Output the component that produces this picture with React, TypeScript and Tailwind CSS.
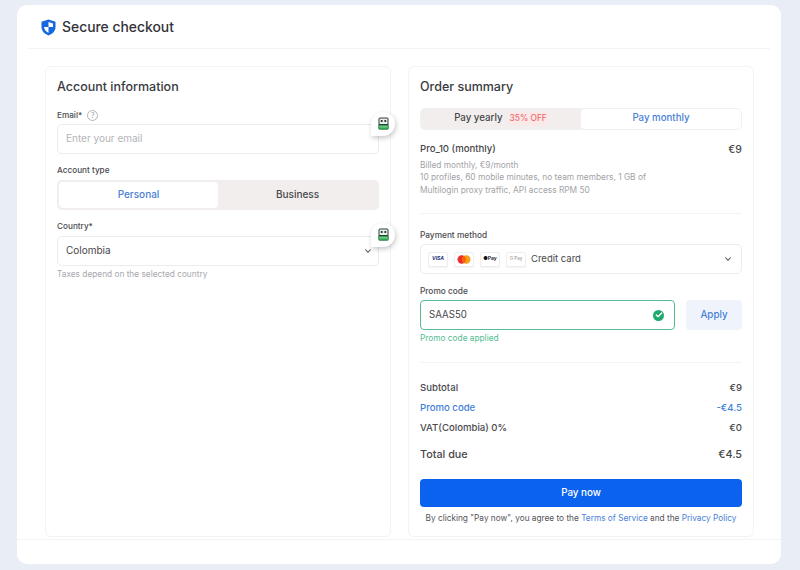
import { ChevronDown, Check } from 'lucide-react'

function ShieldIcon() {
  return (
    <svg width="15" height="17" viewBox="0 0 15 17">
      <path d="M7.5 0.5 L14.5 2.8 V8 C14.5 12 11.5 15 7.5 16.5 C3.5 15 0.5 12 0.5 8 V2.8 Z" fill="#1667e0" />
      <path d="M7.5 3 L12 4.5 V8 H7.5 Z" fill="#fff" />
      <path d="M7.5 8 H3 C3.3 10.6 5 12.7 7.5 13.9 Z" fill="#fff" />
    </svg>
  )
}

function RobotBubble({ top }: { top: string }) {
  return (
    <div className={`absolute ${top} right-[-16px] w-6 h-6 bg-white rounded-t-full rounded-br-full rounded-bl-[4px] shadow-[1px_2px_5px_rgba(0,0,0,0.22)] flex items-center justify-center z-10`}>
      <svg width="11" height="13" viewBox="0 0 11 13">
        <rect x="0.5" y="0.5" width="10" height="12" rx="1.5" fill="#2f3a36" />
        <rect x="1.5" y="1.5" width="8" height="5.5" fill="#e8efe9" />
        <rect x="2.8" y="3" width="1.8" height="2" fill="#2f3a36" />
        <rect x="6.4" y="3" width="1.8" height="2" fill="#2f3a36" />
        <rect x="0.5" y="8" width="10" height="4.5" rx="1" fill="#2ea44f" />
        <rect x="1.5" y="9.5" width="8" height="0.8" fill="#b9e4c4" />
      </svg>
    </div>
  )
}

function PayBadge({ children }: { children: React.ReactNode }) {
  return (
    <div className="w-5 h-[15px] rounded-[2px] border border-[#eeeeee] bg-white flex items-center justify-center shadow-[0_1px_1px_rgba(0,0,0,0.05)]">
      {children}
    </div>
  )
}

function SummaryRow({ label, value, blue }: { label: string; value: string; blue?: boolean }) {
  return (
    <div className={`flex justify-between h-5 items-center text-[9.6px] font-medium ${blue ? 'text-[#3f7fd8]' : 'text-[#4b4b4f]'}`}>
      <span>{label}</span>
      <span>{value}</span>
    </div>
  )
}

export default function App() {
  return (
    <div className="w-[800px] h-[570px] overflow-hidden bg-[#e9edf6] pt-[5px] pl-[17px] font-['Inter',sans-serif]">
      <div className="w-[764px] h-[559px] bg-white rounded-[10px] flex flex-col">
        {/* Header */}
        <div className="h-[44px] mx-[11px] px-[13px] pt-[2px] border-b border-[#f3f4f7] flex items-center gap-[6px] shrink-0">
          <ShieldIcon />
          <h1 className="text-[13.9px] font-medium text-[#333338] leading-none">Secure checkout</h1>
        </div>

        {/* Content */}
        <div className="flex gap-[17px] pl-[28px] pt-[17px]">
          {/* Account */}
          <div className="w-[346px] h-[471px] border border-[#f3f3f6] rounded-[6px] px-[11px]">
            <h2 className="text-[12.5px] font-medium text-[#3a3a3e] leading-none mt-[14px]">Account information</h2>

            <div className="flex items-center gap-[5px] mt-[16px] h-[12px]">
              <span className="text-[8.2px] font-medium text-[#4b4b4f]">Email*</span>
              <span className="w-[11px] h-[11px] rounded-full border border-[#b5b5ba] text-[7px] text-[#a0a0a5] flex items-center justify-center leading-none">?</span>
            </div>
            <div className="relative mt-[2px]">
              <div className="h-[30px] border border-[#ececef] rounded-[5px] flex items-center px-2 text-[10px] text-[#b4b4b8]">Enter your email</div>
              <RobotBubble top="top-[-12px]" />
            </div>

            <div className="text-[8.2px] font-medium text-[#4b4b4f] mt-[10px] h-[12px] leading-[12px]">Account type</div>
            <div className="mt-[4px] h-[30px] rounded-[5px] bg-[#f1eeed] p-[2px] flex text-[10px] font-medium">
              <div className="w-[159px] bg-white rounded-[4px] flex items-center justify-center text-[#4a80d6]">Personal</div>
              <div className="flex-1 flex items-center justify-center text-[#47474b]">Business</div>
            </div>

            <div className="text-[8.2px] font-medium text-[#4b4b4f] mt-[10px] h-[12px] leading-[12px]">Country*</div>
            <div className="relative mt-[4px]">
              <div className="h-[30px] border border-[#ececef] rounded-[5px] flex items-center justify-between pl-2 pr-[5px] text-[10px] text-[#47474b]">
                Colombia
                <ChevronDown className="w-[10px] h-[10px] mt-[1px] text-[#47474b]" strokeWidth={2.5} />
              </div>
              <RobotBubble top="top-[-13px]" />
            </div>
            <p className="text-[8.3px] text-[#a8a8ac] mt-[2px] leading-[12px]">Taxes depend on the selected country</p>
          </div>

          {/* Order summary */}
          <div className="w-[346px] h-[471px] border border-[#f3f3f6] rounded-[6px] px-[11px]">
            <h2 className="text-[12.5px] font-medium text-[#3a3a3e] leading-none mt-[14px]">Order summary</h2>

            <div className="mt-[14px] h-[22px] rounded-[5px] bg-[#f1eeed] border border-[#f1f1f3] flex text-[9.7px] font-medium">
              <div className="w-[160px] flex items-center justify-center gap-[6px] text-[#47474b]">
                Pay yearly
                <span className="text-[8.4px] text-[#ee6a6a] bg-[#fbe9e9] px-[1px]">35% OFF</span>
              </div>
              <div className="flex-1 bg-white rounded-[4px] flex items-center justify-center text-[#4a80d6]">Pay monthly</div>
            </div>

            <div className="flex justify-between mt-[12px]">
              <div>
                <div className="text-[9.6px] font-medium text-[#47474b] leading-[14px]">Pro_10 (monthly)</div>
                <div className="text-[8.33px] text-[#a3a3a7] leading-[12.5px] mt-[3px]">
                  <div>Billed monthly, €9/month</div>
                  <div>10 profiles, 60 mobile minutes, no team members, 1 GB of</div>
                  <div>Multilogin proxy traffic, API access RPM 50</div>
                </div>
              </div>
              <span className="text-[10.5px] font-medium text-[#47474b] leading-none mt-[3px]">€9</span>
            </div>

            <div className="border-t border-[#f3f3f6] mt-[17px]" />

            <div className="text-[8.3px] font-medium text-[#4b4b4f] mt-[15px] h-[12px] leading-[12px]">Payment method</div>
            <div className="mt-[3px] h-[30px] border border-[#ececef] rounded-[5px] flex items-center pl-[7px] pr-[5px] text-[9.5px] text-[#47474b]">
              <div className="flex gap-[6px] mr-[5px]">
                <PayBadge><span className="text-[5px] font-bold italic text-[#26337a]">VISA</span></PayBadge>
                <PayBadge>
                  <svg width="14" height="9" viewBox="0 0 14 9">
                    <circle cx="4.7" cy="4.5" r="4.2" fill="#eb2f2f" />
                    <circle cx="9.3" cy="4.5" r="4.2" fill="#f79e1b" />
                    <path d="M7 1 A4.2 4.2 0 0 1 7 8 A4.2 4.2 0 0 1 7 1" fill="#ff5f00" />
                  </svg>
                </PayBadge>
                <PayBadge><span className="text-[5px] font-semibold text-[#111]">●Pay</span></PayBadge>
                <PayBadge><span className="text-[4.5px] text-[#8a8a8a]">G Pay</span></PayBadge>
              </div>
              Credit card
              <ChevronDown className="w-[10px] h-[10px] ml-auto mr-[3px] text-[#47474b]" strokeWidth={2.5} />
            </div>

            <div className="text-[8.3px] font-medium text-[#4b4b4f] mt-[11px] h-[12px] leading-[12px]">Promo code</div>
            <div className="flex gap-[11px] mt-[3px]">
              <div className="w-[255px] h-[30px] border-[1.5px] border-[#55bc93] rounded-[4px] flex items-center justify-between pl-2 pr-[10px] text-[9.7px] text-[#47474b]">
                SAAS50
                <span className="w-[11px] h-[11px] rounded-full bg-[#1fa971] flex items-center justify-center">
                  <Check className="w-2 h-2 text-white" strokeWidth={4} />
                </span>
              </div>
              <div className="flex-1 h-[30px] rounded-[4px] bg-[#eff4fc] flex items-center justify-center text-[9.8px] font-medium text-[#4a80d6]">Apply</div>
            </div>
            <p className="text-[8.3px] text-[#55bc93] mt-[2px] leading-[12px]">Promo code applied</p>

            <div className="border-t border-[#f3f3f6] mt-[18px]" />

            <div className="mt-[15px]">
              <SummaryRow label="Subtotal" value="€9" />
              <SummaryRow label="Promo code" value="-€4.5" blue />
              <SummaryRow label="VAT(Colombia) 0%" value="€0" />
            </div>
            <div className="flex justify-between items-center mt-[7px] h-5 text-[10.8px] font-medium text-[#47474b]">
              <span>Total due</span>
              <span>€4.5</span>
            </div>
            <button className="w-full h-[28px] mt-[14px] rounded-[4px] bg-[#0b62ee] text-white text-[9.8px] font-medium flex items-center justify-center">Pay now</button>
            <p className="text-[8.27px] text-center whitespace-nowrap text-[#55555a] mt-[5px] leading-[12px]">
              By clicking "Pay now", you agree to the <span className="text-[#4a80d6]">Terms of Service</span> and the <span className="text-[#4a80d6]">Privacy Policy</span>
            </p>
          </div>
        </div>

        {/* Footer */}
        <div className="mt-[2px] mx-0 border-t border-[#f3f4f7]" />
      </div>
    </div>
  )
}
